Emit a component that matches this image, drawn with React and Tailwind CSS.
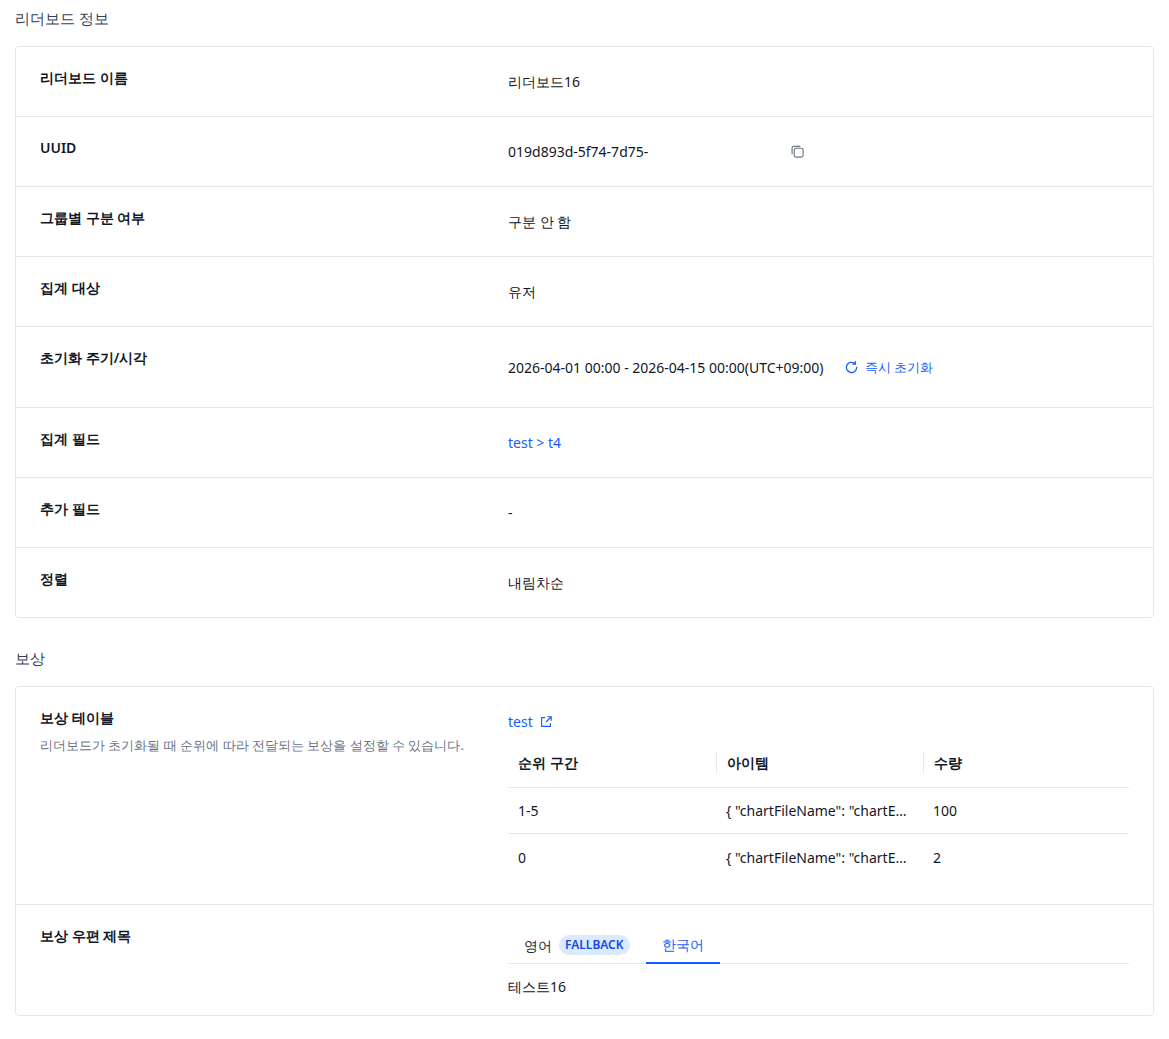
const FONT = "font-['Inter','Noto_Sans_CJK_KR',sans-serif]";

function Row({ label, desc, children, last }) {
  return (
    <div className={`flex px-6 pt-[22px] pb-[24px] ${last ? "" : "border-b border-gray-200"}`}>
      <div className="w-[468px] shrink-0">
        <p className="text-sm font-semibold leading-[18px] text-gray-900">{label}</p>
        {desc ? <p className="mt-2 text-[13px] leading-5 text-gray-500">{desc}</p> : null}
      </div>
      <div className="mt-[2px] min-w-0 flex-1 text-sm leading-[21px] text-gray-900">{children}</div>
    </div>
  );
}

function CopyIcon() {
  return (
    <svg width="15" height="15" viewBox="0 0 16 16" fill="none" stroke="#6b7280" strokeWidth="1.2">
      <rect x="4.5" y="4.5" width="9.5" height="9.5" rx="2" />
      <path d="M11 2.5H4A1.8 1.8 0 0 0 2.2 4.3V11" />
    </svg>
  );
}

export default function App() {
  const rewards = [
    ["1-5", '{ "chartFileName": "chartEx...', "100"],
    ["0", '{ "chartFileName": "chartEx...', "2"],
  ];
  return (
    <div className={`${FONT} bg-white px-[15px] pb-4 text-gray-900`}>
      <h2 className="pt-[7px] text-[15px] leading-[22px] text-gray-700">리더보드 정보</h2>
      <div className="mt-[17px] rounded border border-gray-200">
        <Row label="리더보드 이름">리더보드16</Row>
        <Row label="UUID">
          <div className="flex items-center">
            <span className="w-[282px]">019d893d-5f74-7d75-</span>
            <CopyIcon />
          </div>
        </Row>
        <Row label="그룹별 구분 여부">구분 안 함</Row>
        <Row label="집계 대상">유저</Row>
        <Row label="초기화 주기/시각">
          <div className="flex h-8 items-center gap-5">
            <span>2026-04-01 00:00 - 2026-04-15 00:00(UTC+09:00)</span>
            <button className="flex items-center gap-1.5 text-[13px] text-blue-600">
              <svg width="15" height="15" viewBox="0 0 16 16" fill="none" stroke="currentColor" strokeWidth="1.4" strokeLinecap="round">
                <path d="M13.5 8A5.5 5.5 0 1 1 11.6 3.8" />
                <path d="M12.2 1.8v2.6H9.6" />
              </svg>
              즉시 초기화
            </button>
          </div>
        </Row>
        <Row label="집계 필드"><span className="text-blue-600">test &gt; t4</span></Row>
        <Row label="추가 필드">-</Row>
        <Row label="정렬" last>내림차순</Row>
      </div>

      <h2 className="mt-[29px] text-[15px] leading-[22px] text-gray-700">보상</h2>
      <div className="mt-[17px] rounded border border-gray-200">
        <div className="border-b border-gray-200">
          <Row label="보상 테이블" desc="리더보드가 초기화될 때 순위에 따라 전달되는 보상을 설정할 수 있습니다." last>
            <div className="flex items-center gap-1.5 text-blue-600">
              test
              <svg width="14" height="14" viewBox="0 0 16 16" fill="none" stroke="currentColor" strokeWidth="1.3">
                <path d="M7 3H3v10h10V9" />
                <path d="M9.5 2h4.5v4.5M14 2L8 8" />
              </svg>
            </div>
            <div className="mt-[6px]">
              <div className="flex h-[50px] items-center border-b border-gray-200 font-semibold">
                <div className="w-[208px] px-2.5">순위 구간</div>
                <div className="w-[207px] border-l border-gray-200 px-2.5">아이템</div>
                <div className="flex-1 border-l border-gray-200 px-2.5">수량</div>
              </div>
              {rewards.map((r, i) => (
                <div key={i} className={`flex h-[46px] items-center ${i === 0 ? "border-b border-gray-200" : ""}`}>
                  <div className="w-[208px] px-2.5">{r[0]}</div>
                  <div className="w-[207px] truncate px-2.5">{r[1]}</div>
                  <div className="flex-1 px-2.5">{r[2]}</div>
                </div>
              ))}
            </div>
          </Row>
        </div>
        <Row label="보상 우편 제목" last>
          <div className="-mt-[2px] flex h-[37px] items-stretch border-b border-gray-200">
            <div className="flex items-center gap-[7px] px-4">
              <span className="text-gray-800">영어</span>
              <span className="rounded-full bg-blue-100 px-1.5 text-xs font-semibold leading-5 text-blue-700">FALLBACK</span>
            </div>
            <div className="-mb-px flex items-center border-b-2 border-blue-600 px-4 text-blue-600">한국어</div>
          </div>
          <p className="mt-[12px] -mb-[6px]">테스트16</p>
        </Row>
      </div>
    </div>
  );
}
